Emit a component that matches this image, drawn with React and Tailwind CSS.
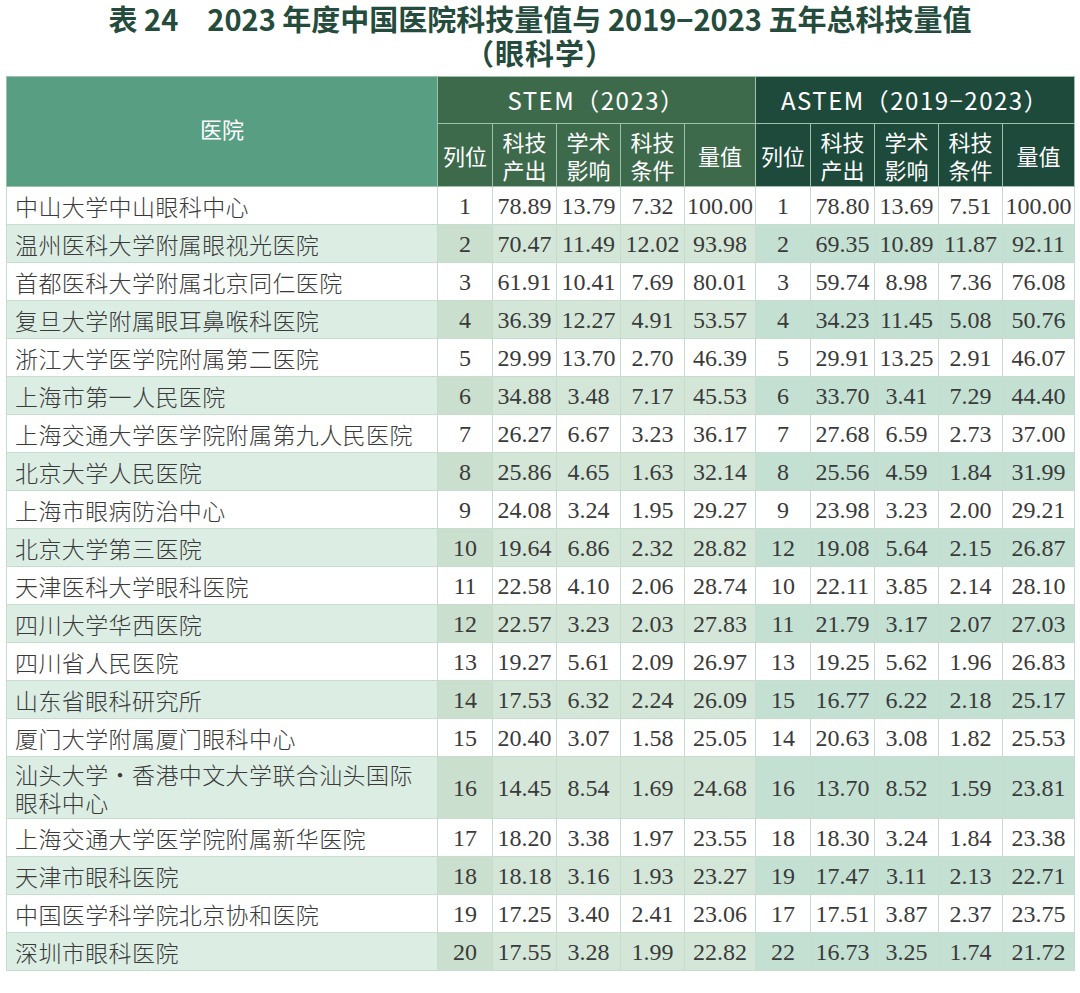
import React from "react";

const rows = [
  ["中山大学中山眼科中心", "1", "78.89", "13.79", "7.32", "100.00", "1", "78.80", "13.69", "7.51", "100.00"],
  ["温州医科大学附属眼视光医院", "2", "70.47", "11.49", "12.02", "93.98", "2", "69.35", "10.89", "11.87", "92.11"],
  ["首都医科大学附属北京同仁医院", "3", "61.91", "10.41", "7.69", "80.01", "3", "59.74", "8.98", "7.36", "76.08"],
  ["复旦大学附属眼耳鼻喉科医院", "4", "36.39", "12.27", "4.91", "53.57", "4", "34.23", "11.45", "5.08", "50.76"],
  ["浙江大学医学院附属第二医院", "5", "29.99", "13.70", "2.70", "46.39", "5", "29.91", "13.25", "2.91", "46.07"],
  ["上海市第一人民医院", "6", "34.88", "3.48", "7.17", "45.53", "6", "33.70", "3.41", "7.29", "44.40"],
  ["上海交通大学医学院附属第九人民医院", "7", "26.27", "6.67", "3.23", "36.17", "7", "27.68", "6.59", "2.73", "37.00"],
  ["北京大学人民医院", "8", "25.86", "4.65", "1.63", "32.14", "8", "25.56", "4.59", "1.84", "31.99"],
  ["上海市眼病防治中心", "9", "24.08", "3.24", "1.95", "29.27", "9", "23.98", "3.23", "2.00", "29.21"],
  ["北京大学第三医院", "10", "19.64", "6.86", "2.32", "28.82", "12", "19.08", "5.64", "2.15", "26.87"],
  ["天津医科大学眼科医院", "11", "22.58", "4.10", "2.06", "28.74", "10", "22.11", "3.85", "2.14", "28.10"],
  ["四川大学华西医院", "12", "22.57", "3.23", "2.03", "27.83", "11", "21.79", "3.17", "2.07", "27.03"],
  ["四川省人民医院", "13", "19.27", "5.61", "2.09", "26.97", "13", "19.25", "5.62", "1.96", "26.83"],
  ["山东省眼科研究所", "14", "17.53", "6.32", "2.24", "26.09", "15", "16.77", "6.22", "2.18", "25.17"],
  ["厦门大学附属厦门眼科中心", "15", "20.40", "3.07", "1.58", "25.05", "14", "20.63", "3.08", "1.82", "25.53"],
  ["TWO", "16", "14.45", "8.54", "1.69", "24.68", "16", "13.70", "8.52", "1.59", "23.81"],
  ["上海交通大学医学院附属新华医院", "17", "18.20", "3.38", "1.97", "23.55", "18", "18.30", "3.24", "1.84", "23.38"],
  ["天津市眼科医院", "18", "18.18", "3.16", "1.93", "23.27", "19", "17.47", "3.11", "2.13", "22.71"],
  ["中国医学科学院北京协和医院", "19", "17.25", "3.40", "2.41", "23.06", "17", "17.51", "3.87", "2.37", "23.75"],
  ["深圳市眼科医院", "20", "17.55", "3.28", "1.99", "22.82", "22", "16.73", "3.25", "1.74", "21.72"],
];

const sub = [
  ["列位"],
  ["科技", "产出"],
  ["学术", "影响"],
  ["科技", "条件"],
  ["量值"],
];

function SubCell({ lines, bg }) {
  return (
    <th className={`${bg} border border-[#9fc0ad] font-normal text-white text-[22px] leading-[28px] text-center align-middle p-0`}>
      {lines.map((l, i) => (
        <div key={i}>{l}</div>
      ))}
    </th>
  );
}

export default function App() {
  return (
    <div className="w-[1080px] h-[993px] bg-white pt-px" style={{ fontFamily: '"Noto Sans CJK SC", "Noto Sans", sans-serif' }}>
      <div className="text-center text-[29px] font-bold leading-[34px] text-[#244b3c]">
        <div>表 24　2023 年度中国医院科技量值与 2019−2023 五年总科技量值</div>
        <div className="tracking-[1px]">（眼科学）</div>
      </div>
      <div className="px-[6px] pt-[7px]">
        <table className="w-[1068px] table-fixed border-collapse">
          <colgroup>
            <col className="w-[431px]" />
            <col className="w-[55px]" />
            <col className="w-[64px]" />
            <col className="w-[64px]" />
            <col className="w-[64px]" />
            <col className="w-[71px]" />
            <col className="w-[55px]" />
            <col className="w-[64px]" />
            <col className="w-[64px]" />
            <col className="w-[64px]" />
            <col className="w-[72px]" />
          </colgroup>
          <thead>
            <tr className="h-[47px]">
              <th rowSpan={2} className="bg-[#579e83] border border-[#9fc0ad] font-normal text-white text-[22px] text-center align-middle pb-[6px]">
                医院
              </th>
              <th colSpan={5} className="bg-[#3e6a4c] border border-[#9fc0ad] font-normal text-white text-[24px] tracking-[1.5px] text-center align-middle">
                STEM（2023）
              </th>
              <th colSpan={5} className="bg-[#1d4a3b] border border-[#9fc0ad] font-normal text-white text-[24px] tracking-[1.5px] text-center align-middle">
                ASTEM（2019−2023）
              </th>
            </tr>
            <tr className="h-[63px]">
              {sub.map((s, i) => (
                <SubCell key={"a" + i} lines={s} bg="bg-[#3e6a4c]" />
              ))}
              {sub.map((s, i) => (
                <SubCell key={"b" + i} lines={s} bg="bg-[#1d4a3b]" />
              ))}
            </tr>
          </thead>
          <tbody className="text-[#3a3a3a]">
            {rows.map((r, idx) => {
              const shaded = idx % 2 === 1;
              const two = r[0] === "TWO";
              return (
                <tr key={idx} className={two ? "h-[62px]" : "h-[38px]"}>
                  <td
                    className={`${shaded ? "bg-[#dcede4]" : "bg-white"} border border-[#c6dccf] text-left align-middle pl-[8px] text-[23px] tracking-[0.4px] leading-[28px] whitespace-nowrap overflow-hidden`}
                    style={{ fontFamily: '"Noto Sans CJK SC", sans-serif', fontWeight: 300 }}
                  >
                    {two ? (
                      <>
                        汕头大学・香港中文大学联合汕头国际
                        <br />
                        眼科中心
                      </>
                    ) : (
                      r[0]
                    )}
                  </td>
                  {r.slice(1).map((v, j) => {
                    let bg = "bg-white";
                    if (shaded) {
                      if (j === 0) bg = "bg-[#cadfcd]";
                      else if (j < 5) bg = "bg-[#d3e6d7]";
                      else bg = "bg-[#c3e0d2]";
                    }
                    return (
                      <td
                        key={j}
                        className={`${bg} border border-[#c6dccf] text-center align-middle p-0 text-[24px] leading-[28px] whitespace-nowrap`}
                        style={{ fontFamily: '"Liberation Serif", serif' }}
                      >
                        {v}
                      </td>
                    );
                  })}
                </tr>
              );
            })}
          </tbody>
        </table>
      </div>
    </div>
  );
}
